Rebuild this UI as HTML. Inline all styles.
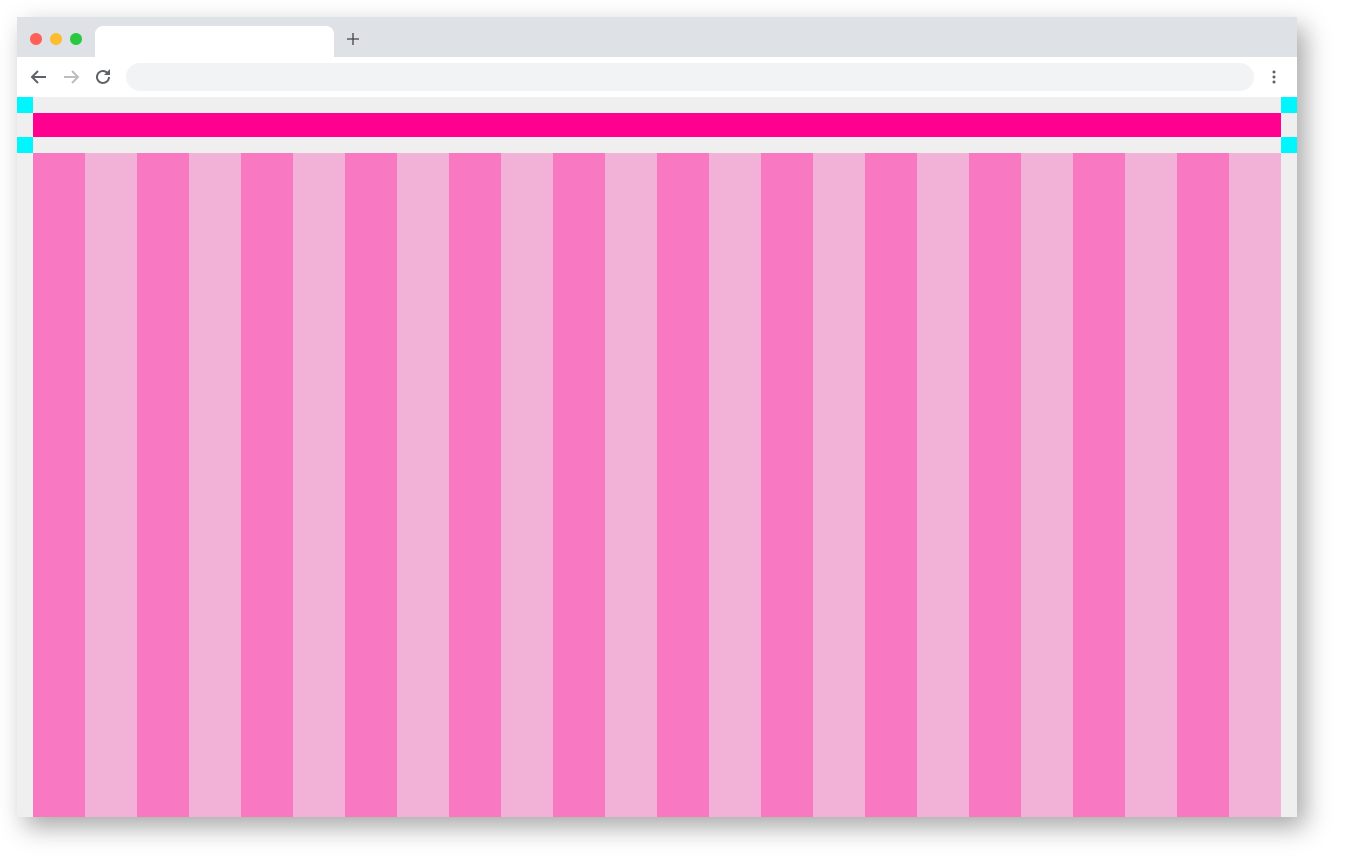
<!DOCTYPE html>
<html><head><style>
body{margin:0;width:1345px;height:865px;background:#fff;position:relative;overflow:hidden;font-family:"Liberation Sans",sans-serif}
.win{position:absolute;left:17px;top:17px;width:1280px;height:800px;background:#efefef;box-shadow:8px 10px 24px rgba(0,0,0,.35)}
.tabs{position:absolute;left:0;top:0;width:1280px;height:40px;background:#dee1e6}
.dot{position:absolute;top:16px;width:12px;height:12px;border-radius:50%}
.tab{position:absolute;left:78px;top:9px;width:239px;height:31px;background:#fff;border-radius:8px 8px 0 0}
.tool{position:absolute;left:0;top:40px;width:1280px;height:40px;background:#fff}
.addr{position:absolute;left:109px;top:6px;width:1128px;height:28px;background:#f1f3f4;border-radius:14px}
.c{position:absolute;width:16px;height:16px;background:#00f6ff}
.stripes{position:absolute;left:16px;top:136px;width:1248px;height:664px;background:repeating-linear-gradient(90deg,#f878c2 0 52px,#f2b1d6 52px 104px)}
</style></head><body>
<div class="win">
<div class="tabs">
<div class="dot" style="left:13px;background:#ff5f57"></div>
<div class="dot" style="left:33px;background:#febc2e"></div>
<div class="dot" style="left:53px;background:#28c840"></div>
<div class="tab"></div>
<svg style="position:absolute;left:329px;top:15px" width="14" height="14"><path d="M7 1v12M1 7h12" stroke="#444" stroke-width="1.3"/></svg>
</div>
<div class="tool">
<svg style="position:absolute;left:12px;top:11px" width="20" height="18"><path d="M17 9H3M9 3L3 9l6 6" stroke="#5f6368" stroke-width="2" fill="none"/></svg>
<svg style="position:absolute;left:44px;top:11px" width="20" height="18"><path d="M3 9h14M11 3l6 6-6 6" stroke="#bdbdbd" stroke-width="2" fill="none"/></svg>
<svg style="position:absolute;left:76px;top:10px" width="20" height="20"><path d="M16 10a6 6 0 1 1-2-4.5" stroke="#5f6368" stroke-width="2" fill="none"/><path d="M17 2v6h-6z" fill="#5f6368"/></svg>
<div class="addr"></div>
<svg style="position:absolute;left:1255px;top:13px" width="4" height="14"><circle cx="2" cy="2" r="1.5" fill="#5f6368"/><circle cx="2" cy="7" r="1.5" fill="#5f6368"/><circle cx="2" cy="12" r="1.5" fill="#5f6368"/></svg>
</div>
<div class="c" style="left:0;top:80px"></div>
<div class="c" style="left:1264px;top:80px"></div>
<div class="c" style="left:0;top:120px"></div>
<div class="c" style="left:1264px;top:120px"></div>
<div style="position:absolute;left:16px;top:96px;width:1248px;height:24px;background:#ff008f"></div>
<div class="stripes"></div>
</div>
</body></html>
